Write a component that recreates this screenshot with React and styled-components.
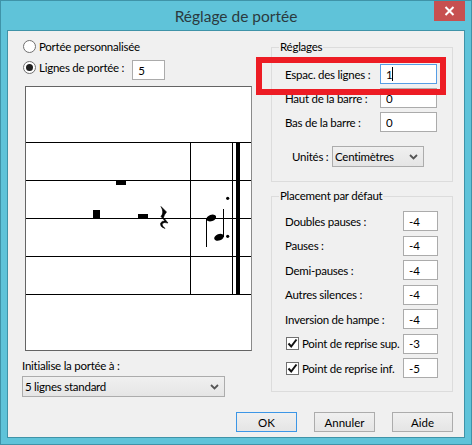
import React from 'react';
import styled, { createGlobalStyle } from 'styled-components';

const GlobalStyle = createGlobalStyle`
  html, body {
    margin: 0;
    padding: 0;
    background: #5fc3d9;
  }
`;

const font = `'Lato', 'Noto Sans', sans-serif`;

const Window = styled.div`
  position: relative;
  box-sizing: border-box;
  width: 472px;
  height: 445px;
  border: 1px solid #3f93a8;
  background: #5fc3d9;
  display: flex;
  flex-direction: column;
  font-family: ${font};
  font-size: 11.5px;
  letter-spacing: -0.25px;
  white-space: nowrap;
  color: #000;
`;

const TitleBar = styled.div`
  position: relative;
  box-sizing: border-box;
  height: 29px;
  flex: none;
  display: flex;
  align-items: center;
  justify-content: center;
  font-size: 15.5px;
  letter-spacing: 0;
  color: #2b3a3f;
  padding-top: 1px;
`;

const CloseButton = styled.div`
  position: absolute;
  top: 0;
  right: 6px;
  width: 31px;
  height: 20px;
  background: #c75050;
  display: flex;
  align-items: center;
  justify-content: center;
`;

const Client = styled.div`
  box-sizing: border-box;
  margin: 0 6px;
  height: 408px;
  border: 1px solid #3f93a8;
  background: #f0f0f0;
  display: flex;
  flex-direction: column;
  padding-left: 14px;
`;

const Body = styled.div`
  display: flex;
  gap: 20px;
  height: 372px;
`;

const LeftColumn = styled.div`
  width: 229px;
  padding-top: 5px;
  display: flex;
  flex-direction: column;
`;

const RightColumn = styled.div`
  width: 182px;
  padding-top: 8px;
  display: flex;
  flex-direction: column;
  gap: 6px;
`;

const RadioRow = styled.div`
  display: flex;
  align-items: center;
  height: 21px;
  padding-left: 1px;
  gap: 3px;
`;

const Radio = styled.span`
  box-sizing: border-box;
  width: 13px;
  height: 13px;
  border-radius: 50%;
  border: 1px solid #707070;
  background: #fff;
  display: flex;
  align-items: center;
  justify-content: center;
  &::after {
    content: '';
    display: ${(p) => (p.$checked ? 'block' : 'none')};
    width: 7px;
    height: 7px;
    border-radius: 50%;
    background: #1f1f1f;
  }
`;

const Input = styled.input`
  box-sizing: border-box;
  width: ${(p) => p.$width}px;
  height: 20px;
  margin: 0;
  padding: 0 0 0 5px;
  border: 1px solid ${(p) => (p.$focused ? '#569de5' : '#ababab')};
  background: #fff;
  font-family: ${font};
  font-size: 11.5px;
  color: #000;
  outline: none;
`;

const InputWrap = styled.span`
  position: relative;
  display: flex;
`;

const Caret = styled.span`
  position: absolute;
  left: 12px;
  top: 3px;
  width: 1px;
  height: 14px;
  background: #000;
`;

const LineCountInput = styled(Input)`
  align-self: flex-start;
  margin: 3px 0 0 5px;
`;

const StaffBox = styled.div`
  box-sizing: border-box;
  width: 227px;
  height: 265px;
  margin: 8px 0 0 3px;
  border: 1px solid #646464;
  border-right-color: #8a8a8a;
  background: #fff;
`;

const StaffSvg = styled.svg`
  display: block;
  width: 225px;
  height: 263px;
`;

const InitLabel = styled.div`
  margin-top: 5px;
  height: 19px;
  line-height: 19px;
`;

const SelectWrap = styled.div`
  position: relative;
  width: ${(p) => p.$width}px;
  height: 21px;
  margin-top: ${(p) => p.$top || 0}px;
`;

const Select = styled.select`
  box-sizing: border-box;
  width: 100%;
  height: 100%;
  margin: 0;
  padding: 0 0 0 2px;
  border: 1px solid #acacac;
  border-radius: 0;
  appearance: none;
  background: linear-gradient(#f0f0f0, #e5e5e5);
  font-family: ${font};
  font-size: 11.5px;
  letter-spacing: -0.25px;
  color: #000;
  outline: none;
`;

const Chevron = styled.svg`
  position: absolute;
  right: 6px;
  top: 8px;
  width: 9px;
  height: 6px;
  pointer-events: none;
`;

const Group = styled.fieldset`
  box-sizing: border-box;
  margin: 0;
  padding: 0 ${(p) => p.$right}px 0 13px;
  border: 1px solid #dcdcdc;
  height: ${(p) => p.$height}px;
  min-width: 0;
`;

const GroupTitle = styled.legend`
  margin-left: -6px;
  padding: 0 1px;
  height: 16px;
  line-height: 16px;
`;

const Rows = styled.div`
  display: flex;
  flex-direction: column;
  gap: ${(p) => p.$gap}px;
  padding-top: ${(p) => p.$top}px;
`;

const Row = styled.div`
  display: flex;
  align-items: center;
  justify-content: space-between;
  height: 20px;
`;

const CheckLabel = styled.span`
  display: flex;
  align-items: center;
  gap: 3px;
  margin-left: 1px;
`;

const Checkbox = styled.span`
  box-sizing: border-box;
  width: 13px;
  height: 13px;
  border: 1px solid #707070;
  background: #fff;
  display: flex;
  align-items: center;
  justify-content: center;
`;

const UnitsRow = styled.div`
  display: flex;
  align-items: center;
  justify-content: space-between;
  margin: 14px 13px 0 7px;
`;

const Footer = styled.div`
  display: flex;
  justify-content: flex-end;
  gap: 17px;
  padding-top: 9px;
  padding-right: 11px;
`;

const Button = styled.button`
  box-sizing: border-box;
  width: 61px;
  height: 20px;
  margin: 0;
  padding: 0;
  border: 1px solid ${(p) => (p.$primary ? '#3c96e6' : '#acacac')};
  border-radius: 0;
  background: linear-gradient(#f0f0f0, #e5e5e5);
  font-family: ${font};
  font-size: 11.5px;
  color: #000;
`;

const Highlight = styled.div`
  position: absolute;
  left: 255px;
  top: 56px;
  width: 190px;
  height: 38px;
  box-sizing: border-box;
  border: 6px solid #ed1c24;
  pointer-events: none;
`;

const staffLines = [142, 180, 218, 256, 294];

const Staff = () => (
  <StaffSvg viewBox="26 87 225 263">
    {staffLines.map((y) => (
      <rect key={y} x="26" y={y} width="225" height="1" fill="#000" />
    ))}
    <rect x="190" y="142" width="1" height="153" fill="#000" />
    <rect x="232" y="142" width="1" height="153" fill="#000" />
    <rect x="236" y="142" width="4" height="153" fill="#000" />
    {/* silences */}
    <rect x="93" y="210" width="7" height="8" fill="#000" />
    <rect x="116" y="180" width="10" height="5" fill="#000" />
    <rect x="138" y="214" width="10" height="4" fill="#000" />
    <path
      d="M161 206.5 L166.5 212 Q164 215 163.5 217.5 L168 223 Q163.5 221.5 162 224 Q162 226 165 228.5 Q160 227 160.5 223.5 Q161.5 220.5 165 221 L161 216.5 Q164.5 212.5 161 206.5 Z"
      fill="#000"
      stroke="#000"
      strokeWidth="0.6"
    />
    {/* notes */}
    <ellipse cx="211.3" cy="218" rx="5" ry="3.2" transform="rotate(-20 211.3 218)" fill="#000" />
    <rect x="206" y="218" width="1" height="29" fill="#000" />
    <ellipse cx="219" cy="237.3" rx="5" ry="3.2" transform="rotate(-20 219 237.3)" fill="#000" />
    <rect x="223" y="209" width="1" height="28" fill="#000" />
    <circle cx="227.7" cy="198.3" r="1.6" fill="#000" />
    <circle cx="227.7" cy="236.3" r="1.6" fill="#000" />
  </StaffSvg>
);

const SelectBox = ({ width, top, value }) => (
  <SelectWrap $width={width} $top={top}>
    <Select defaultValue={value}>
      <option>{value}</option>
    </Select>
    <Chevron viewBox="0 0 9 6">
      <path d="M1 1 L4.5 4.5 L8 1" fill="none" stroke="#555" strokeWidth="1.8" />
    </Chevron>
  </SelectWrap>
);

const CheckMark = () => (
  <svg width="11" height="11" viewBox="0 0 11 11">
    <path d="M1.5 5.5 L4.2 8.5 L9.5 1.5" fill="none" stroke="#111" strokeWidth="2" />
  </svg>
);

const placement = [
  { label: 'Doubles pauses :', value: '-4' },
  { label: 'Pauses :', value: '-4' },
  { label: 'Demi-pauses :', value: '-4' },
  { label: 'Autres silences :', value: '-4' },
  { label: 'Inversion de hampe :', value: '-4' },
  { label: 'Point de reprise sup.', value: '-3', check: true },
  { label: 'Point de reprise inf.', value: '-5', check: true },
];

export default function App() {
  return (
    <Window>
      <GlobalStyle />
      <TitleBar>
        Réglage de portée
        <CloseButton>
          <svg width="11" height="10" viewBox="0 0 11 10">
            <path d="M1.5 1 L9.5 9 M9.5 1 L1.5 9" stroke="#fff" strokeWidth="2" />
          </svg>
        </CloseButton>
      </TitleBar>
      <Client>
        <Body>
          <LeftColumn>
            <RadioRow>
              <Radio />
              Portée personnalisée
            </RadioRow>
            <RadioRow>
              <Radio $checked />
              Lignes de portée :
              <LineCountInput $width={33} defaultValue="5" />
            </RadioRow>
            <StaffBox>
              <Staff />
            </StaffBox>
            <InitLabel>Initialise la portée à :</InitLabel>
            <SelectBox width={203} top={1} value="5 lignes standard" />
          </LeftColumn>
          <RightColumn>
            <Group $height={143} $right={15}>
              <GroupTitle>Réglages</GroupTitle>
              <Rows $gap={4} $top={9}>
                <Row>
                  Espac. des lignes :
                  <InputWrap>
                    <Input $width={57} $focused defaultValue="1" />
                    <Caret />
                  </InputWrap>
                </Row>
                <Row>
                  Haut de la barre :
                  <Input $width={57} defaultValue="0" />
                </Row>
                <Row>
                  Bas de la barre :
                  <Input $width={57} defaultValue="0" />
                </Row>
              </Rows>
              <UnitsRow>
                Unités :
                <SelectBox width={92} value="Centimètres" />
              </UnitsRow>
            </Group>
            <Group $height={204} $right={14}>
              <GroupTitle>Placement par défaut</GroupTitle>
              <Rows $gap={4.5} $top={7}>
                {placement.map((item) => (
                  <Row key={item.label}>
                    {item.check ? (
                      <CheckLabel>
                        <Checkbox>
                          <CheckMark />
                        </Checkbox>
                        {item.label}
                      </CheckLabel>
                    ) : (
                      item.label
                    )}
                    <Input $width={35} defaultValue={item.value} />
                  </Row>
                ))}
              </Rows>
            </Group>
          </RightColumn>
        </Body>
        <Footer>
          <Button $primary>OK</Button>
          <Button>Annuler</Button>
          <Button>Aide</Button>
        </Footer>
      </Client>
      <Highlight />
    </Window>
  );
}
